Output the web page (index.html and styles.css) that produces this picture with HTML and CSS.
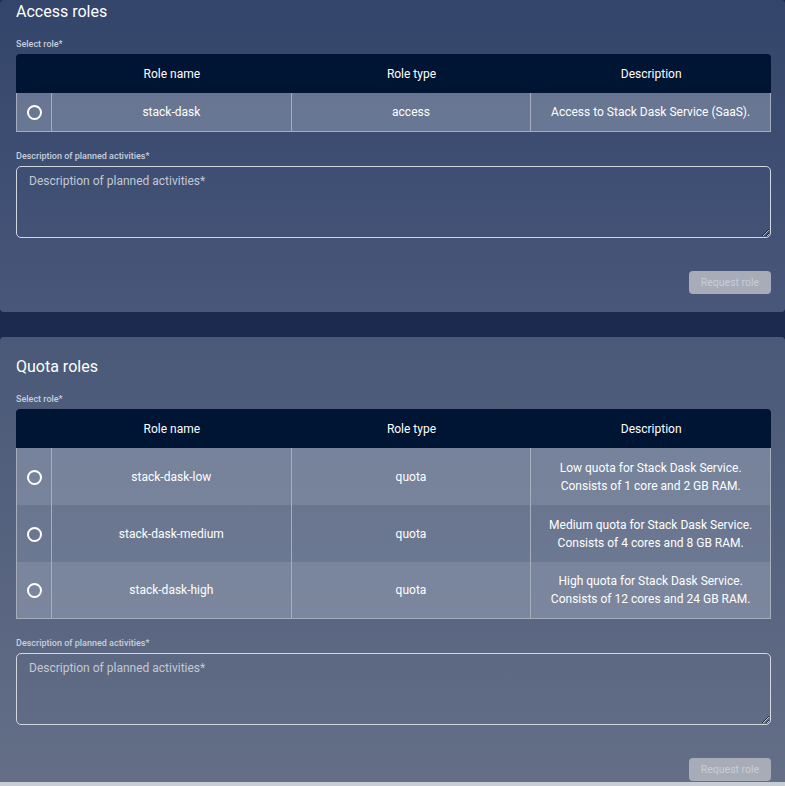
FILE: index.html
```html
<!DOCTYPE html>
<html>
<head>
<meta charset="utf-8">
<link rel="stylesheet" href="styles.css">
</head>
<body>
<div class="page">
  <section class="card card-first">
    <h2 class="title">Access roles</h2>
    <div class="label">Select role*</div>
    <table class="roles">
      <thead>
        <tr><th class="sel"></th><th>Role name</th><th>Role type</th><th>Description</th></tr>
      </thead>
      <tbody>
        <tr class="single"><td class="sel"><span class="radio"></span></td><td>stack-dask</td><td>access</td><td>Access to Stack Dask Service (SaaS).</td></tr>
      </tbody>
    </table>
    <div class="label label-desc">Description of planned activities*</div>
    <textarea class="desc" placeholder="Description of planned activities*"></textarea>
    <div class="actions"><button class="btn" disabled>Request role</button></div>
  </section>
  <section class="card card-second">
    <h2 class="title">Quota roles</h2>
    <div class="label">Select role*</div>
    <table class="roles">
      <thead>
        <tr><th class="sel"></th><th>Role name</th><th>Role type</th><th>Description</th></tr>
      </thead>
      <tbody>
        <tr class="multi"><td class="sel"><span class="radio"></span></td><td>stack-dask-low</td><td>quota</td><td>Low quota for Stack Dask Service.<br>Consists of 1 core and 2 GB RAM.</td></tr>
        <tr class="multi alt"><td class="sel"><span class="radio"></span></td><td>stack-dask-medium</td><td>quota</td><td>Medium quota for Stack Dask Service.<br>Consists of 4 cores and 8 GB RAM.</td></tr>
        <tr class="multi"><td class="sel"><span class="radio"></span></td><td>stack-dask-high</td><td>quota</td><td>High quota for Stack Dask Service.<br>Consists of 12 cores and 24 GB RAM.</td></tr>
      </tbody>
    </table>
    <div class="label label-desc">Description of planned activities*</div>
    <textarea class="desc" placeholder="Description of planned activities*"></textarea>
    <div class="actions"><button class="btn" disabled>Request role</button></div>
  </section>
  <div class="footer-strip"></div>
</div>
</body>
</html>
```
FILE: styles.css
```css
* { box-sizing: border-box; }
html, body {
  margin: 0;
  padding: 0;
  height: 786px;
  overflow: hidden;
  background: #1b2a4e;
  font-family: Roboto, "Liberation Sans", Arial, sans-serif;
}
.page {
  display: flex;
  flex-direction: column;
  gap: 25px;
}
.card {
  padding: 0 14px 18px 16px;
  border-radius: 4px;
  color: #fff;
}
.card-first {
  padding-top: 2px;
  background: linear-gradient(180deg, #33456a 0%, #48577a 100%);
}
.card-second {
  padding-top: 20px;
  padding-bottom: 1px;
  background: linear-gradient(180deg, #4a5978 0%, #646e87 100%);
  border-radius: 4px 4px 0 0;
}
.title {
  margin: 0;
  font-size: 16px;
  font-weight: 400;
  line-height: 19px;
  color: #fff;
}
.label {
  margin-top: 18px;
  margin-bottom: 4px;
  font-size: 9px;
  line-height: 11px;
  font-weight: 500;
  color: #c9cfda;
}
.label-desc {
  margin-top: 19px;
  margin-bottom: 4px;
}
.roles {
  width: 755px;
  border-collapse: separate;
  border-spacing: 0;
  table-layout: fixed;
  font-size: 12px;
  color: #fff;
}
.roles th {
  background: #001433;
  height: 39px;
  font-weight: 400;
  text-align: center;
  padding: 0;
}
.roles th.sel { width: 36px; border-top-left-radius: 4px; }
.roles th:last-child { border-top-right-radius: 4px; }
.roles td {
  text-align: center;
  padding: 0;
  border-right: 1px solid #a7aebb;
  background: rgba(180, 190, 205, 0.38);
  line-height: 18px;
}
.roles tr.alt td { background: rgba(170, 180, 198, 0.26); }
.roles td:first-child { border-left: 1px solid #a7aebb; }
.roles tbody tr:last-child td { border-bottom: 1px solid #a7aebb; }
.roles tr.single td { height: 39px; }
.roles tr.multi td { height: 57px; }
.radio {
  display: inline-block;
  width: 15px;
  height: 15px;
  border: 2px solid #fff;
  border-radius: 50%;
  vertical-align: middle;
  margin-left: 1px;
}
.desc {
  display: block;
  width: 755px;
  height: 72px;
  margin: 0;
  padding: 6px 12px;
  border: 1px solid #d3d7df;
  border-radius: 5px;
  background: transparent;
  color: #fff;
  font-family: Roboto, "Liberation Sans", Arial, sans-serif;
  font-size: 12px;
  line-height: 16px;
  resize: vertical;
}
.desc::placeholder { color: #c3c9d4; }
.actions {
  display: flex;
  justify-content: flex-end;
  width: 755px;
  margin-top: 33px;
}
.btn {
  width: 82px;
  height: 23px;
  border: 0;
  border-radius: 4px;
  background: #a7acb8;
  color: #c9cdd5;
  font-family: Roboto, "Liberation Sans", Arial, sans-serif;
  font-size: 10.5px;
  padding: 0;
}
.footer-strip {
  height: 10px;
  background: #c8ccd4;
  margin-top: -25px;
}
```
